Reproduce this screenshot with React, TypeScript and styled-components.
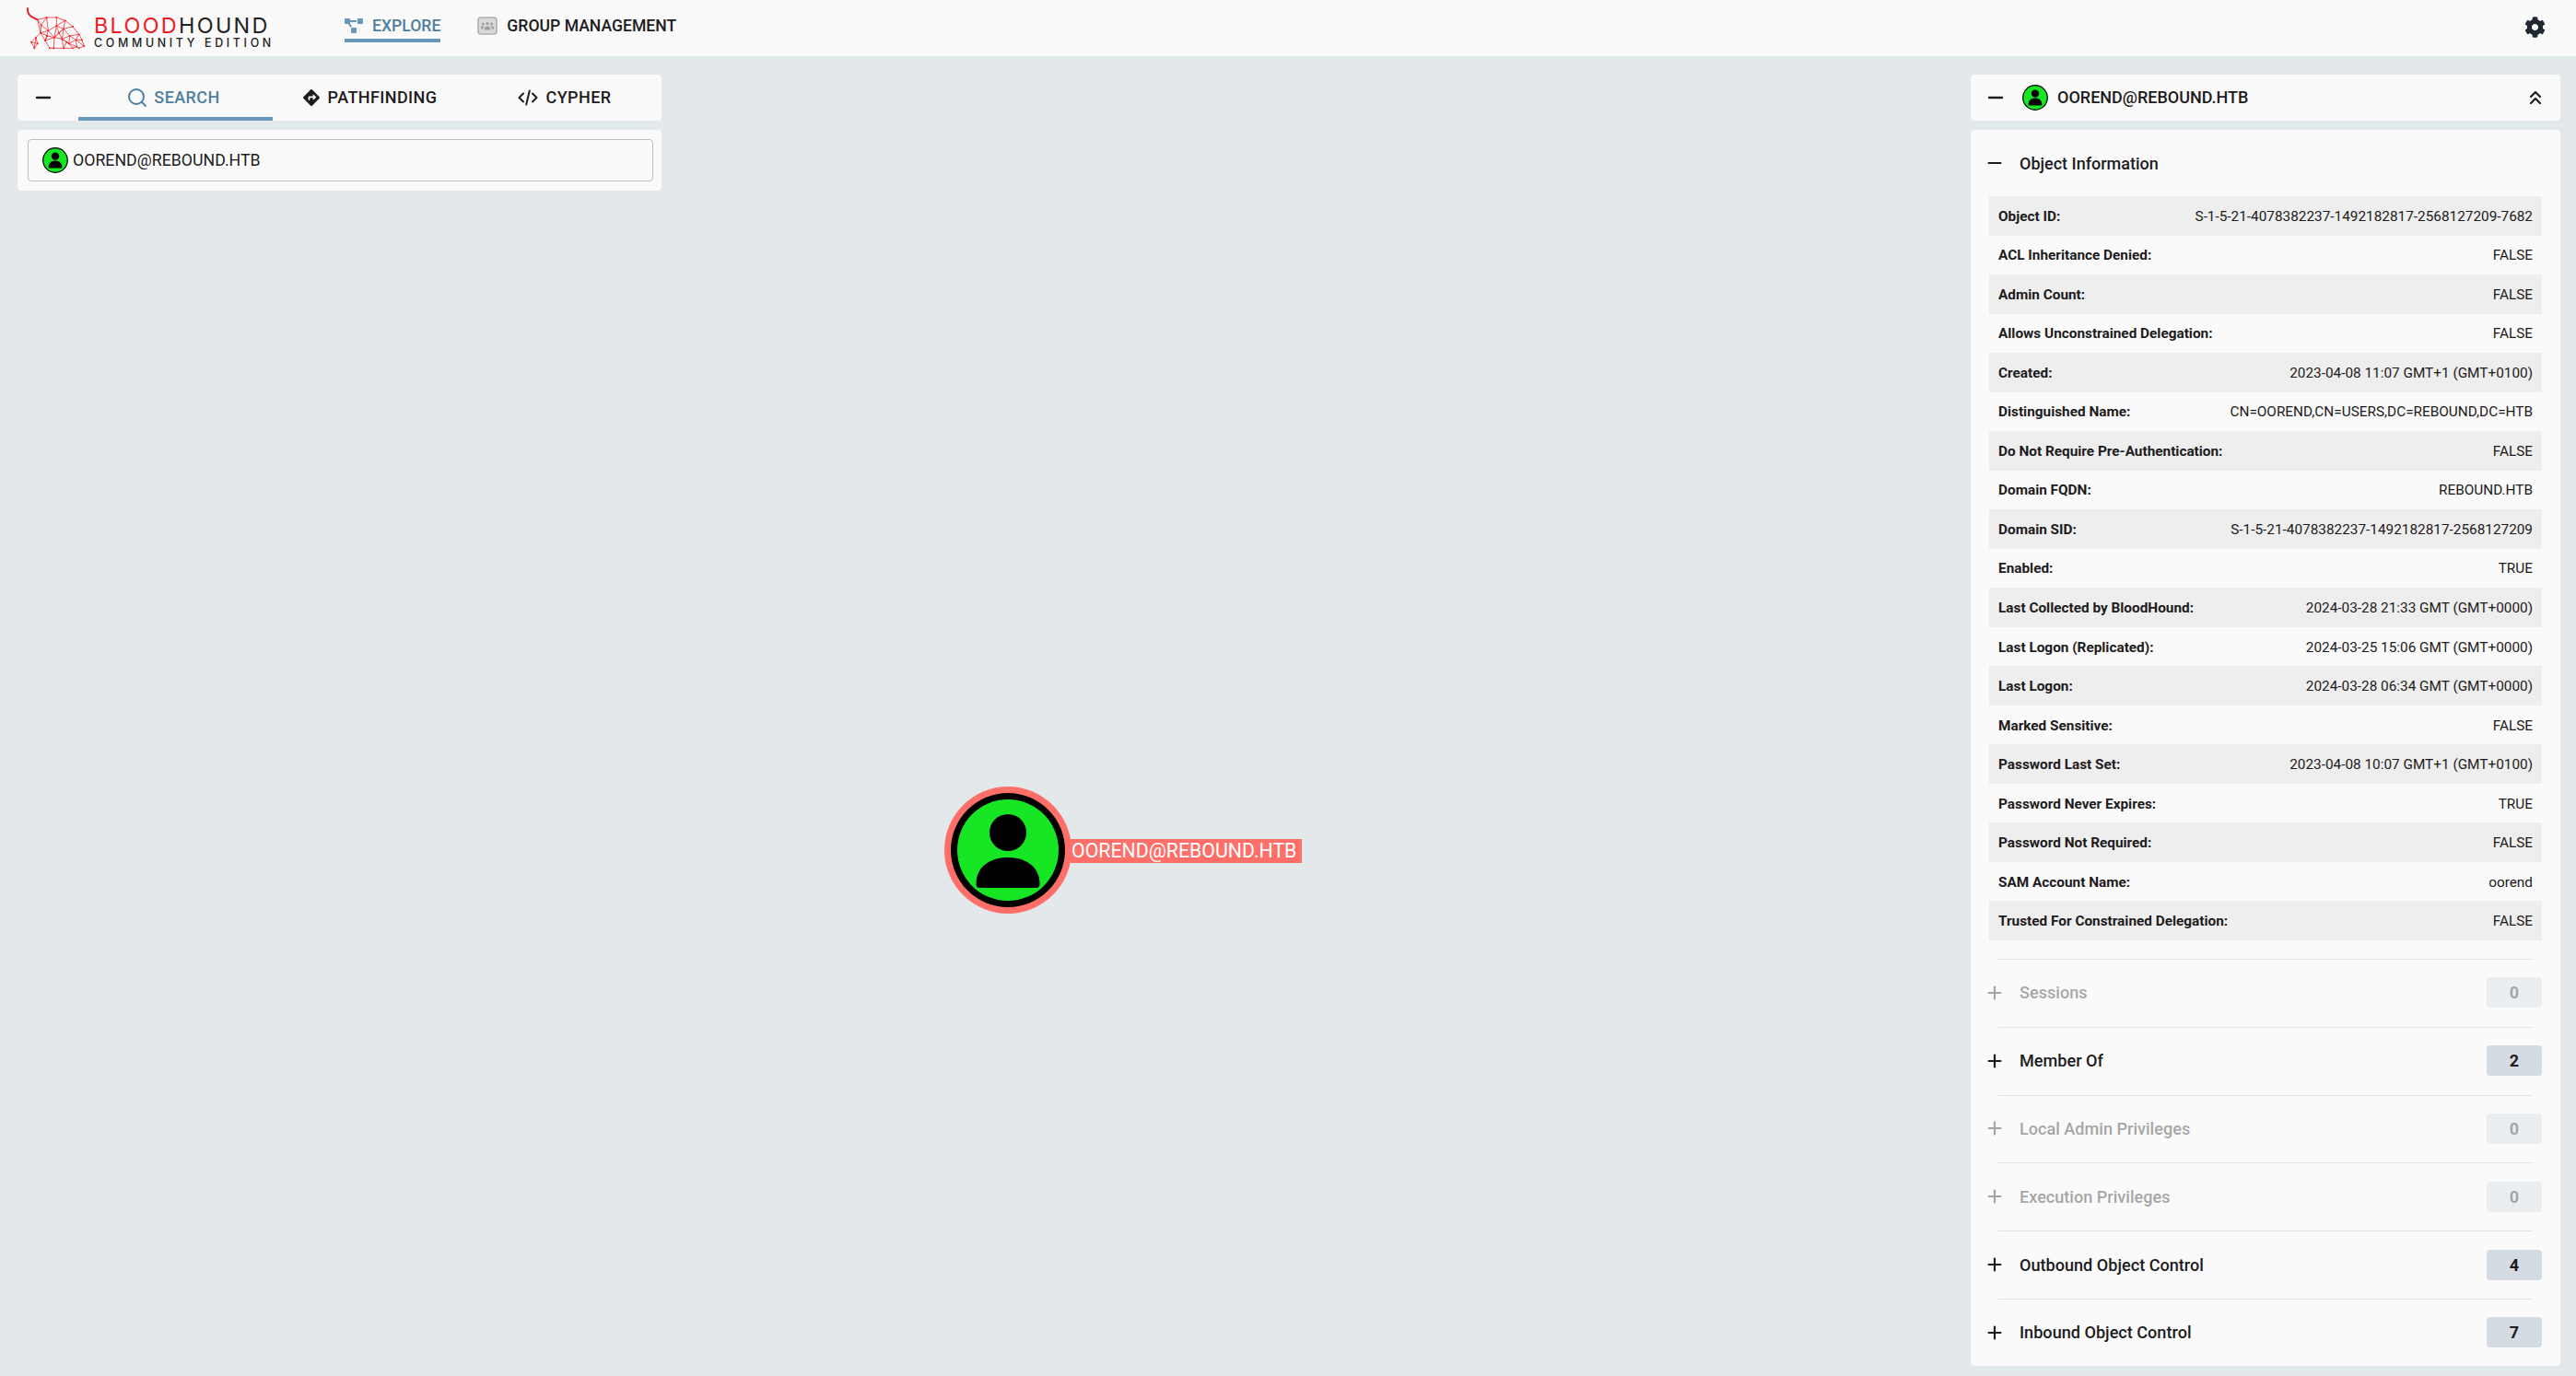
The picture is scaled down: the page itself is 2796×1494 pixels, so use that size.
import React, { FC } from 'react';
import styled, { createGlobalStyle } from 'styled-components';
import { FaCog, FaDirections, FaProjectDiagram } from 'react-icons/fa';
import { ChevronsUp, Minus, Plus, Search } from 'lucide-react';

const GlobalStyle = createGlobalStyle`
  html, body {
    margin: 0;
    padding: 0;
    background: #e3e8eb;
    color: #1d1b20;
    font-family: Roboto, "Liberation Sans", sans-serif;
  }
`;

const Page = styled.div`
  position: relative;
  width: 2796px;
  height: 1494px;
  overflow: hidden;
  display: flex;
  flex-direction: column;
`;

const Header = styled.header`
  height: 61px;
  flex: none;
  background: #fafafa;
  display: flex;
  align-items: center;
  padding: 0 33px 0 24px;
`;

const LogoWrap = styled.div`
  display: flex;
  align-items: center;
  width: 350px;
  flex: none;
`;

const LogoText = styled.div`
  margin-left: 2px;
  display: flex;
  flex-direction: column;
  font-family: Inter, sans-serif;
  margin-top: 7px;
`;

const LogoTitle = styled.div`
  font-size: 23.4px;
  line-height: 25px;
  font-weight: 400;
  letter-spacing: 2.3px;
  color: #222;
  white-space: nowrap;
`;

const LogoRed = styled.span`
  color: #ed1c24;
`;

const LogoSub = styled.div`
  font-size: 12.4px;
  line-height: 14px;
  font-weight: 500;
  letter-spacing: 3.67px;
  color: #222;
  white-space: nowrap;
`;

const Nav = styled.nav`
  display: flex;
  align-items: center;
  gap: 40px;
`;

const NavItem = styled.div<{ $active?: boolean }>`
  height: 46px;
  display: flex;
  align-items: center;
  gap: 10px;
  box-sizing: border-box;
  border-bottom: 4px solid ${(p) => (p.$active ? '#6798b9' : 'transparent')};
  padding-top: 14px;
  font-size: 17.6px;
  font-weight: 500;
  color: ${(p) => (p.$active ? '#4f7f9f' : '#1d1b20')};
  text-transform: uppercase;
  white-space: nowrap;
  align-self: flex-end;
  margin-bottom: 15px;

  svg {
    flex: none;
  }
`;

const Spacer = styled.div`
  flex: 1;
`;

const CogIcon = styled(FaCog)`
  margin-top: -2px;
`;

const Main = styled.main`
  flex: 1;
  display: flex;
  justify-content: space-between;
  align-items: flex-start;
  padding: 20px 17px 0 19px;
`;

const Column = styled.div<{ $width: number }>`
  width: ${(p) => p.$width}px;
  display: flex;
  flex-direction: column;
  gap: 10px;
`;

const Card = styled.div`
  background: #fafafa;
  border-radius: 4px;
`;

const TabBar = styled(Card)`
  height: 50px;
  display: flex;
  align-items: stretch;
  overflow: hidden;
`;

const MinusSlot = styled.div`
  width: 66px;
  flex: none;
  display: flex;
  align-items: center;
  padding-left: 21px;
  box-sizing: border-box;
`;

const Tab = styled.div<{ $active?: boolean }>`
  width: 211px;
  flex: none;
  box-sizing: border-box;
  display: flex;
  align-items: center;
  justify-content: center;
  gap: 9px;
  font-size: 18px;
  font-weight: 500;
  letter-spacing: 0.4px;
  text-transform: uppercase;
  color: ${(p) => (p.$active ? '#4f7f9f' : '#1d1b20')};
  border-bottom: 4px solid ${(p) => (p.$active ? '#6798b9' : 'transparent')};
  padding-top: 3px;
`;

const SearchGlyph = styled(Search)`
  margin-left: -5px;
  margin-right: -3px;
`;

const DashGlyph = styled(Minus)`
  margin-left: -5px;
  flex: none;
`;

const PlusGlyph = styled(Plus)`
  margin-left: -5px;
  flex: none;
`;

const SearchCard = styled(Card)`
  height: 66px;
  padding: 10px 9px 10px 11px;
  box-sizing: border-box;
`;

const SearchBox = styled.div`
  height: 46px;
  box-sizing: border-box;
  border: 1px solid #bdbdbd;
  border-radius: 4px;
  display: flex;
  align-items: center;
  gap: 5px;
  padding-left: 15px;
  font-size: 17.75px;
`;

const TitleCard = styled(Card)`
  height: 50px;
  display: flex;
  align-items: center;
  padding: 0 20px;
  font-size: 18px;
  font-weight: 500;
`;

const TitleName = styled.div`
  flex: 1;
  margin-left: 10px;
  margin-top: -1px;
`;

const TitleIcon = styled.div`
  margin-left: 17px;
  display: flex;
`;

const CollapseGlyph = styled(ChevronsUp)`
  margin-right: -5px;
`;

const InfoCard = styled(Card)`
  padding: 0 20px;
  height: 1342px;
  box-sizing: border-box;
`;

const SectionHead = styled.div`
  height: 72px;
  display: flex;
  align-items: center;
  font-size: 18px;
  font-weight: 500;
`;

const IconSlot = styled.div`
  width: 33px;
  flex: none;
  display: flex;
  align-items: center;
`;

const FieldGrid = styled.div`
  height: 808px;
  display: grid;
  grid-auto-rows: 1fr;
`;

const Field = styled.div<{ $shaded: boolean }>`
  display: flex;
  align-items: center;
  justify-content: space-between;
  padding: 1px 10px 0;
  font-size: 15.35px;
  background: ${(p) => (p.$shaded ? '#eeeeee' : 'transparent')};
`;

const FieldLabel = styled.div`
  font-weight: 700;
`;

const FieldValue = styled.div`
  font-weight: 400;
`;

const Sections = styled.div`
  margin-top: 20px;
`;

const Section = styled.div`
  height: 73.8px;
  box-sizing: border-box;
  position: relative;
  display: flex;
  align-items: center;
`;

const Rule = styled.div`
  position: absolute;
  top: 0;
  left: 10px;
  right: 10px;
  height: 1px;
  background: #e0e2e4;
`;

const SectionRow = styled.div<{ $disabled: boolean }>`
  flex: 1;
  display: flex;
  align-items: center;
  font-size: 18.1px;
  font-weight: 500;
  opacity: ${(p) => (p.$disabled ? 0.38 : 1)};
`;

const SectionName = styled.div`
  flex: 1;
`;

const Badge = styled.div`
  width: 60px;
  height: 33px;
  border-radius: 4px;
  background: #d5dbe2;
  display: flex;
  align-items: center;
  justify-content: center;
  font-size: 18px;
  font-weight: 700;
`;

const GraphNode = styled.div`
  position: absolute;
  left: 1025px;
  top: 854px;
  width: 400px;
  height: 138px;
`;

const NodeCircle = styled.svg`
  position: absolute;
  left: 0;
  top: 0;
`;

const NodeLabel = styled.div`
  position: absolute;
  left: 137px;
  top: 57px;
  height: 26px;
  width: 251px;
  box-sizing: border-box;
  padding-left: 1px;
  background: #ff6f69;
  color: #fff;
  font-size: 21.3px;
  line-height: 26px;
  white-space: nowrap;
`;

const UserBadge: FC<{ size: number }> = ({ size }) => (
  <svg width={size} height={size} viewBox="0 0 28 28">
    <circle cx="14" cy="14" r="13.3" fill="#17e625" stroke="#000" strokeWidth="1.2" />
    <circle cx="14" cy="9.6" r="4.2" />
    <path d="M6.6 21.6c0-4.4 3-7.2 7.4-7.2s7.4 2.8 7.4 7.2c0 .5-.3.8-.8.8H7.4c-.5 0-.8-.3-.8-.8z" />
  </svg>
);

const GroupIcon: FC = () => (
  <svg width="22" height="20" viewBox="0 0 22 20">
    <rect x="1" y="1" width="20" height="18" rx="3" fill="#d9d9d9" stroke="#adb0b3" strokeWidth="1.6" />
    <g fill="#9b9fa3">
      <circle cx="11" cy="7.6" r="1.7" />
      <circle cx="6.3" cy="8" r="1.4" />
      <circle cx="15.7" cy="8" r="1.4" />
      <path d="M7.6 14.4c0-2.4 1.4-4 3.4-4s3.4 1.6 3.4 4z" />
      <path d="M3.8 13.4c0-2 1-3.4 2.6-3.4.5 0 .8.1 1 .3-.8.8-1.2 1.9-1.2 3.1z" />
      <path d="M18.2 13.4c0-2-1-3.4-2.6-3.4-.5 0-.8.1-1 .3.8.8 1.2 1.9 1.2 3.1z" />
    </g>
  </svg>
);

const CodeIcon: FC = () => (
  <svg width="22" height="18" viewBox="0 0 22 18" fill="none" stroke="currentColor" strokeWidth="2" strokeLinecap="round" strokeLinejoin="round">
    <path d="M6 4.500 1.500 9 6 13.500" />
    <path d="M16 4.500 20.500 9 16 13.500" />
    <path d="M12.800 1.500 9.200 16.500" />
  </svg>
);

// hand traced mesh of the hound, coordinates are from a 3x crop of the logo
const HOUND_POINTS: [number, number][] = [
  [50, 52], [80, 45], [112, 45], [140, 55], [165, 75], [185, 100], [195, 118], [202, 138],
  [62, 70], [85, 88], [112, 72], [135, 82], [155, 105], [175, 118], [60, 95], [45, 110],
  [30, 125], [40, 145], [75, 120], [90, 145], [105, 110], [103, 145], [130, 115], [135, 145],
  [152, 130], [165, 145], [178, 140], [185, 145], [50, 130], [82, 105], [120, 95], [145, 125],
];
const HOUND_LINES: [number, number][] = [
  [0, 1], [1, 2], [2, 3], [3, 4], [4, 5], [5, 6], [6, 7], [0, 8], [1, 8], [8, 9], [1, 9], [2, 10], [9, 10],
  [3, 10], [10, 11], [3, 11], [4, 11], [11, 12], [5, 12], [12, 13], [5, 13], [6, 13], [7, 13], [8, 14], [9, 14],
  [14, 15], [15, 16], [16, 17], [15, 17], [14, 18], [9, 18], [18, 19], [18, 20], [9, 20], [10, 20], [20, 21],
  [19, 21], [20, 22], [11, 22], [12, 22], [22, 23], [21, 23], [22, 24], [12, 24], [24, 25], [24, 26], [13, 26],
  [25, 26], [26, 27], [7, 27], [13, 24], [23, 25], [11, 20], [28, 15], [28, 16], [28, 17], [29, 14], [29, 18],
  [29, 20], [30, 10], [30, 11], [30, 20], [30, 22], [31, 22], [31, 23], [31, 24], [0, 14],
];

const HoundLogo: FC = () => (
  <svg width="76" height="54" viewBox="0 0 228 162">
    <path d="M18 13c-1 14 3 24 14 30l18 9" fill="none" stroke="#ed1c24" strokeWidth="6" />
    <g stroke="#ed1c24" strokeWidth="2.2" fill="none">
      {HOUND_LINES.map(([a, b]) => (
        <line
          key={`${a}-${b}`}
          x1={HOUND_POINTS[a][0]}
          y1={HOUND_POINTS[a][1]}
          x2={HOUND_POINTS[b][0]}
          y2={HOUND_POINTS[b][1]}
        />
      ))}
    </g>
    <g fill="#ed1c24">
      {HOUND_POINTS.map(([x, y]) => (
        <circle key={`${x}-${y}`} cx={x} cy={y} r="2.8" />
      ))}
    </g>
  </svg>
);

const FIELDS: [string, string][] = [
  ['Object ID:', 'S-1-5-21-4078382237-1492182817-2568127209-7682'],
  ['ACL Inheritance Denied:', 'FALSE'],
  ['Admin Count:', 'FALSE'],
  ['Allows Unconstrained Delegation:', 'FALSE'],
  ['Created:', '2023-04-08 11:07 GMT+1 (GMT+0100)'],
  ['Distinguished Name:', 'CN=OOREND,CN=USERS,DC=REBOUND,DC=HTB'],
  ['Do Not Require Pre-Authentication:', 'FALSE'],
  ['Domain FQDN:', 'REBOUND.HTB'],
  ['Domain SID:', 'S-1-5-21-4078382237-1492182817-2568127209'],
  ['Enabled:', 'TRUE'],
  ['Last Collected by BloodHound:', '2024-03-28 21:33 GMT (GMT+0000)'],
  ['Last Logon (Replicated):', '2024-03-25 15:06 GMT (GMT+0000)'],
  ['Last Logon:', '2024-03-28 06:34 GMT (GMT+0000)'],
  ['Marked Sensitive:', 'FALSE'],
  ['Password Last Set:', '2023-04-08 10:07 GMT+1 (GMT+0100)'],
  ['Password Never Expires:', 'TRUE'],
  ['Password Not Required:', 'FALSE'],
  ['SAM Account Name:', 'oorend'],
  ['Trusted For Constrained Delegation:', 'FALSE'],
];

const SECTIONS: [string, number][] = [
  ['Sessions', 0],
  ['Member Of', 2],
  ['Local Admin Privileges', 0],
  ['Execution Privileges', 0],
  ['Outbound Object Control', 4],
  ['Inbound Object Control', 7],
];

export default function App() {
  return (
    <Page>
      <GlobalStyle />
      <Header>
        <LogoWrap>
          <HoundLogo />
          <LogoText>
            <LogoTitle>
              <LogoRed>BLOOD</LogoRed>HOUND
            </LogoTitle>
            <LogoSub>COMMUNITY EDITION</LogoSub>
          </LogoText>
        </LogoWrap>
        <Nav>
          <NavItem $active>
            <FaProjectDiagram size={20} color="#6798b9" />
            Explore
          </NavItem>
          <NavItem>
            <GroupIcon />
            Group Management
          </NavItem>
        </Nav>
        <Spacer />
        <CogIcon size={23} color="#1f2733" />
      </Header>
      <Main>
        <Column $width={699}>
          <TabBar>
            <MinusSlot>
              <DashGlyph size={24} strokeWidth={2.4} />
            </MinusSlot>
            <Tab $active>
              <SearchGlyph size={24} strokeWidth={2} />
              Search
            </Tab>
            <Tab>
              <FaDirections size={18} />
              Pathfinding
            </Tab>
            <Tab>
              <CodeIcon />
              Cypher
            </Tab>
          </TabBar>
          <SearchCard>
            <SearchBox>
              <UserBadge size={28} />
              OOREND@REBOUND.HTB
            </SearchBox>
          </SearchCard>
        </Column>
        <Column $width={640}>
          <TitleCard>
            <DashGlyph size={24} strokeWidth={2.4} />
            <TitleIcon>
              <UserBadge size={28} />
            </TitleIcon>
            <TitleName>OOREND@REBOUND.HTB</TitleName>
            <CollapseGlyph size={24} strokeWidth={2.2} />
          </TitleCard>
          <InfoCard>
            <SectionHead>
              <IconSlot>
                <DashGlyph size={22} strokeWidth={2.4} />
              </IconSlot>
              Object Information
            </SectionHead>
            <FieldGrid>
              {FIELDS.map(([label, value], i) => (
                <Field key={label} $shaded={i % 2 === 0}>
                  <FieldLabel>{label}</FieldLabel>
                  <FieldValue>{value}</FieldValue>
                </Field>
              ))}
            </FieldGrid>
            <Sections>
              {SECTIONS.map(([name, count]) => (
                <Section key={name}>
                  <Rule />
                  <SectionRow $disabled={count === 0}>
                    <IconSlot>
                      <PlusGlyph size={22} strokeWidth={2.4} />
                    </IconSlot>
                    <SectionName>{name}</SectionName>
                    <Badge>{count}</Badge>
                  </SectionRow>
                </Section>
              ))}
            </Sections>
          </InfoCard>
        </Column>
      </Main>
      <GraphNode>
        <NodeCircle width="138" height="138" viewBox="0 0 138 138">
          <circle cx="69" cy="69" r="69" fill="#ff6f69" />
          <circle cx="69" cy="69" r="62" fill="#000" />
          <circle cx="69" cy="69" r="55" fill="#17e625" />
          <circle cx="69" cy="50" r="20" fill="#000" />
          <path d="M34.500 106c0-19 15-29 34.500-29s34.500 10 34.500 29c0 3-2 4-4 4H38.500c-2 0-4-1-4-4z" fill="#000" />
        </NodeCircle>
        <NodeLabel>OOREND@REBOUND.HTB</NodeLabel>
      </GraphNode>
    </Page>
  );
}
